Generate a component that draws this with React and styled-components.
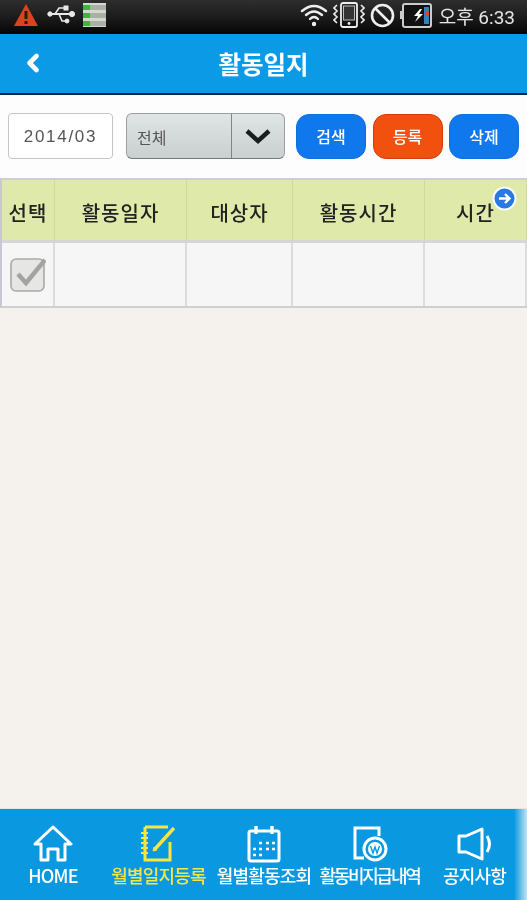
import React from 'react';
import styled, { createGlobalStyle } from 'styled-components';
import { ChevronLeft } from 'lucide-react';

const columns = ['선택', '활동일자', '대상자', '활동시간', '시간'];

const navItems = [
  { label: 'HOME', icon: <HomeIcon /> },
  { label: '월별일지등록', icon: <NoteIcon />, active: true },
  { label: '월별활동조회', icon: <CalendarIcon /> },
  { label: '활동비지급내역', icon: <PayIcon />, tight: true },
  { label: '공지사항', icon: <SpeakerIcon /> },
];

function HomeIcon() {
  return (
    <svg width="40" height="38" viewBox="0 0 40 38" fill="none" stroke="currentColor" strokeWidth="3" strokeLinejoin="round">
      <path d="M20 2 L38 19 L32 19 L32 35 L25 35 L25 24 L15 24 L15 35 L8 35 L8 19 L2 19 Z" />
    </svg>
  );
}

function NoteIcon() {
  return (
    <svg width="40" height="38" viewBox="0 0 40 38" fill="none" stroke="currentColor" strokeWidth="3">
      <path d="M6 2 H29 M31 17 V35 H6 V2" />
      <path d="M2 8 H9 M2 13 H9 M2 18 H9 M2 23 H9 M2 28 H9" strokeWidth="2.2" />
      <path d="M16 24 L35 3" strokeWidth="3.4" />
      <path d="M14 26 L18 25 L15 22 Z" fill="currentColor" strokeWidth="1" />
    </svg>
  );
}

function CalendarIcon() {
  return (
    <svg width="36" height="38" viewBox="0 0 36 38" fill="none" stroke="currentColor" strokeWidth="3">
      <rect x="3" y="6" width="30" height="30" rx="2" />
      <path d="M10 1 V9 M26 1 V9" strokeWidth="3.4" />
      <path d="M13 18 h3 M20 18 h3 M26 18 h3 M7 24 h3 M13 24 h3 M20 24 h3 M26 24 h3 M7 30 h3 M13 30 h3" strokeWidth="2.6" />
    </svg>
  );
}

function PayIcon() {
  return (
    <svg width="36" height="36" viewBox="0 0 36 36" fill="none" stroke="currentColor" strokeWidth="3">
      <path d="M12 32 H3 V2 H27 V10" />
      <circle cx="23" cy="23" r="11" />
      <circle cx="23" cy="23" r="7" fill="currentColor" stroke="none" />
      <path d="M18.5 20 L21 27 L23 21 L25 27 L27.5 20" stroke="#0a98e0" strokeWidth="1.4" />
    </svg>
  );
}

function SpeakerIcon() {
  return (
    <svg width="36" height="34" viewBox="0 0 36 34" fill="none" stroke="currentColor" strokeWidth="3" strokeLinejoin="round">
      <path d="M9 9 L25 2 V32 L9 25 H2 V9 Z" />
      <path d="M30 9 Q35 17 30 25" />
    </svg>
  );
}

function WarningIcon() {
  return (
    <svg width="26" height="24" viewBox="0 0 26 24">
      <path d="M13 1 L25 23 H1 Z" fill="#d9441c" />
      <rect x="11.5" y="8" width="3" height="8" fill="#2a1a10" />
      <rect x="11.5" y="18" width="3" height="3" fill="#2a1a10" />
    </svg>
  );
}

function UsbIcon() {
  return (
    <svg width="28" height="22" viewBox="0 0 28 22" fill="#e8e8e8" stroke="#e8e8e8">
      <path d="M1 10 H25" strokeWidth="2" fill="none" />
      <path d="M8 10 L12 4 H17 M12 10 L15 17 H19" strokeWidth="1.6" fill="none" />
      <circle cx="25" cy="10" r="2.6" />
      <circle cx="3" cy="10" r="2.2" />
      <rect x="17" y="2" width="4" height="4" />
      <circle cx="20" cy="17" r="2" />
    </svg>
  );
}

function StorageIcon() {
  return (
    <svg width="23" height="24" viewBox="0 0 23 24">
      <rect x="0" y="0" width="23" height="24" fill="#d4d8d0" />
      <rect x="0" y="2" width="7" height="5" fill="#3fb43a" />
      <rect x="0" y="10" width="7" height="5" fill="#3fb43a" />
      <rect x="0" y="18" width="7" height="5" fill="#3fb43a" />
      <rect x="7" y="2" width="16" height="5" fill="#a9b0a6" />
      <rect x="7" y="10" width="16" height="5" fill="#a9b0a6" />
      <rect x="7" y="18" width="16" height="5" fill="#a9b0a6" />
    </svg>
  );
}

function WifiIcon() {
  return (
    <svg width="28" height="24" viewBox="0 0 28 24" fill="none" stroke="#eee" strokeWidth="2.4" strokeLinecap="round">
      <path d="M2 8 Q14 -2 26 8" />
      <path d="M6 12 Q14 5 22 12" />
      <path d="M10 16 Q14 12 18 16" />
      <circle cx="14" cy="21" r="2.2" fill="#eee" stroke="none" />
    </svg>
  );
}

function VibrateIcon() {
  return (
    <svg width="32" height="26" viewBox="0 0 32 26" fill="none" stroke="#eee">
      <rect x="8" y="1" width="16" height="24" rx="2" strokeWidth="1.8" />
      <rect x="10.5" y="4" width="11" height="14" fill="#333" stroke="#bbb" strokeWidth="1" />
      <circle cx="16" cy="21.5" r="1.4" fill="#eee" stroke="none" />
      <path d="M4 3 L1 6 L4 9 L1 12 L4 15 L1 18 L4 21 M28 3 L31 6 L28 9 L31 12 L28 15 L31 18 L28 21" strokeWidth="1.6" />
    </svg>
  );
}

function BlockedIcon() {
  return (
    <svg width="25" height="25" viewBox="0 0 25 25" fill="none" stroke="#eee" strokeWidth="2.6">
      <circle cx="12.5" cy="12.5" r="10.5" />
      <path d="M5 5 L20 20" />
    </svg>
  );
}

function BatteryIcon() {
  return (
    <svg width="32" height="25" viewBox="0 0 32 25">
      <rect x="0" y="8" width="3" height="8" fill="#ccc" />
      <rect x="3" y="1" width="28" height="23" rx="2" fill="#111" stroke="#ccc" strokeWidth="2" />
      <rect x="24" y="4" width="5" height="17" fill="#3a7fb0" />
      <rect x="25" y="8" width="4" height="5" fill="#e2431c" />
      <path d="M20 6 L14 13 H18 L15 19 L23 11 H19 L22 6 Z" fill="#fff" />
    </svg>
  );
}

function CheckMark() {
  return (
    <svg width="36" height="36" viewBox="0 0 36 36">
      <rect x="1" y="2" width="33" height="32" rx="5" fill="#e6e6e4" stroke="#a9a9a7" strokeWidth="1.6" />
      <path d="M8 17 L16 26 L35 3" fill="none" stroke="#a3a3a1" strokeWidth="4.4" />
    </svg>
  );
}

function ArrowBadge() {
  return (
    <svg width="25" height="25" viewBox="0 0 25 25">
      <circle cx="12.5" cy="12.5" r="12" fill="#f7fbff" />
      <circle cx="12.5" cy="12.5" r="10" fill="#2a78e4" />
      <path d="M7 12.5 H17 M13 8 L17.5 12.5 L13 17" fill="none" stroke="#fff" strokeWidth="2.4" />
    </svg>
  );
}

export default function App() {
  return (
    <>
      <GlobalStyle />
      <Page>
        <StatusBar>
          <StatusGroup>
            <WarningIcon />
            <UsbIcon />
            <StorageIcon />
          </StatusGroup>
          <StatusGroup $right>
            <WifiIcon />
            <VibrateIcon />
            <BlockedIcon />
            <BatteryIcon />
            <Clock>오후 6:33</Clock>
          </StatusGroup>
        </StatusBar>

        <Header>
          <BackButton>
            <ChevronLeft size={28} strokeWidth={4} />
          </BackButton>
          <Title>활동일지</Title>
        </Header>

        <Toolbar>
          <DateField>2014/03</DateField>
          <Select>
            <SelectValue>전체</SelectValue>
            <SelectArrow>
              <svg width="26" height="16" viewBox="0 0 26 16" fill="none" stroke="#1c1c1c" strokeWidth="4.4">
                <path d="M2 3 L13 13 L24 3" />
              </svg>
            </SelectArrow>
          </Select>
          <Buttons>
            <ActionButton>검색</ActionButton>
            <ActionButton $danger>등록</ActionButton>
            <ActionButton>삭제</ActionButton>
          </Buttons>
        </Toolbar>

        <Table>
          {columns.map((col) => (
            <HeadCell key={col}>{col}</HeadCell>
          ))}
          <Cell>
            <CheckMark />
          </Cell>
          <Cell />
          <Cell />
          <Cell />
          <Cell />
          <Badge>
            <ArrowBadge />
          </Badge>
        </Table>

        <Spacer />

        <BottomNav>
          {navItems.map((item) => (
            <NavItem key={item.label} $active={item.active}>
              <NavIcon>{item.icon}</NavIcon>
              <NavLabel $tight={item.tight}>{item.label}</NavLabel>
            </NavItem>
          ))}
          <NavFade />
        </BottomNav>
      </Page>
    </>
  );
}

const GlobalStyle = createGlobalStyle`
  html, body {
    margin: 0;
    padding: 0;
    background: #f5f1ed;
  }
  * {
    box-sizing: border-box;
  }
`;

const Page = styled.div`
  width: 527px;
  height: 900px;
  display: flex;
  flex-direction: column;
  overflow: hidden;
  background: #f5f1ed;
  font-family: "Noto Sans CJK KR", "Liberation Sans", sans-serif;
  filter: blur(0.45px);
`;

const StatusBar = styled.div`
  height: 34px;
  flex: none;
  display: flex;
  align-items: center;
  justify-content: space-between;
  padding: 0 12px 4px 13px;
  background: linear-gradient(#2e2e2e, #1c1c1c 50%, #050505);
`;

const StatusGroup = styled.div`
  display: flex;
  align-items: center;
  gap: ${({ $right }) => ($right ? '5px' : '8px')};
`;

const Clock = styled.span`
  margin-left: 2px;
  font-family: "Roboto", "Noto Sans CJK KR", sans-serif;
  font-size: 19px;
  color: #e4e4e4;
  white-space: nowrap;
`;

const Header = styled.div`
  height: 61px;
  flex: none;
  position: relative;
  display: flex;
  align-items: center;
  justify-content: center;
  background: #0a9ae6;
  border-bottom: 2px solid #06233d;
`;

const BackButton = styled.div`
  position: absolute;
  left: 19px;
  top: 15px;
  display: flex;
  color: #fff;
`;

const Title = styled.h1`
  margin: 0;
  font-size: 24.5px;
  font-weight: 700;
  color: #fff;
`;

const Toolbar = styled.div`
  height: 84px;
  flex: none;
  display: flex;
  align-items: center;
  padding: 0 8px 2px;
  background: #fdfdfd;
`;

const DateField = styled.div`
  flex: none;
  width: 105px;
  height: 46px;
  display: flex;
  align-items: center;
  justify-content: center;
  padding-top: 2px;
  background: #fff;
  border: 1.5px solid #c4c4c2;
  border-radius: 4px;
  font-family: "Liberation Sans", sans-serif;
  font-size: 17px;
  letter-spacing: 1.7px;
  color: #555;
`;

const Select = styled.div`
  flex: none;
  width: 159px;
  height: 46px;
  margin-left: 13px;
  display: flex;
  background: linear-gradient(#dfe4e4, #c9d0d0);
  border: 1.5px solid #9a9f9f;
  border-bottom-color: #777;
  border-radius: 6px;
`;

const SelectValue = styled.div`
  flex: 1;
  display: flex;
  align-items: center;
  padding: 1px 0 0 10px;
  font-size: 16px;
  color: #555;
`;

const SelectArrow = styled.div`
  width: 53px;
  display: flex;
  align-items: center;
  justify-content: center;
  border-left: 1.5px solid #7f8585;
`;

const Buttons = styled.div`
  flex: none;
  display: flex;
  gap: 6.5px;
  margin-left: 11px;
`;

const ActionButton = styled.div`
  width: 70px;
  height: 45px;
  display: flex;
  align-items: center;
  justify-content: center;
  border-radius: 13px;
  font-size: 16px;
  font-weight: 500;
  color: #fff;
  background: ${({ $danger }) => ($danger ? '#f2500f' : '#0f78ec')};
  border: 1px solid ${({ $danger }) => ($danger ? '#d83a08' : '#0f6fe0')};
`;

const Table = styled.div`
  position: relative;
  flex: none;
  display: grid;
  grid-template-columns: 53px 132px 106px 132px 102px;
  grid-template-rows: 63px 63px;
  border-top: 2px solid #cfcfd3;
  border-bottom: 2px solid #cfcfd1;
  border-left: 2px solid #c8c8d4;
  margin-top: -1px;
`;

const HeadCell = styled.div`
  display: flex;
  align-items: center;
  justify-content: center;
  padding-top: 4px;
  background: #dfe9a9;
  border-right: 1px solid #cfd6a8;
  border-bottom: 3px solid #d5d7d6;
  font-size: 20px;
  font-weight: 500;
  letter-spacing: 1px;
  color: #222;
`;

const Cell = styled.div`
  display: flex;
  align-items: center;
  justify-content: center;
  background: #f6f6f6;
  border-right: 2px solid #dcdcdc;
`;

const Badge = styled.div`
  position: absolute;
  top: 6px;
  right: 10px;
  display: flex;
`;

const Spacer = styled.div`
  flex: 1;
`;

const BottomNav = styled.nav`
  position: relative;
  height: 92px;
  flex: none;
  display: grid;
  grid-template-columns: 106px 105px 106px 105px 105px;
  background: #0a98e0;
  border-top: 1px solid #e4e6e6;
`;

const NavItem = styled.div`
  display: flex;
  flex-direction: column;
  align-items: center;
  padding-top: 15px;
  color: ${({ $active }) => ($active ? '#f5e642' : '#fff')};
`;

const NavIcon = styled.div`
  height: 39px;
  display: flex;
  align-items: center;
  justify-content: center;
`;

const NavLabel = styled.div`
  font-size: 18px;
  font-weight: 500;
  line-height: 24px;
  letter-spacing: ${({ $tight }) => ($tight ? '-2.3px' : '-0.8px')};
  white-space: nowrap;
`;

const NavFade = styled.div`
  position: absolute;
  top: 0;
  right: 0;
  bottom: 0;
  width: 13px;
  background: linear-gradient(to right, rgba(255, 255, 255, 0), rgba(225, 240, 245, 0.85));
`;
